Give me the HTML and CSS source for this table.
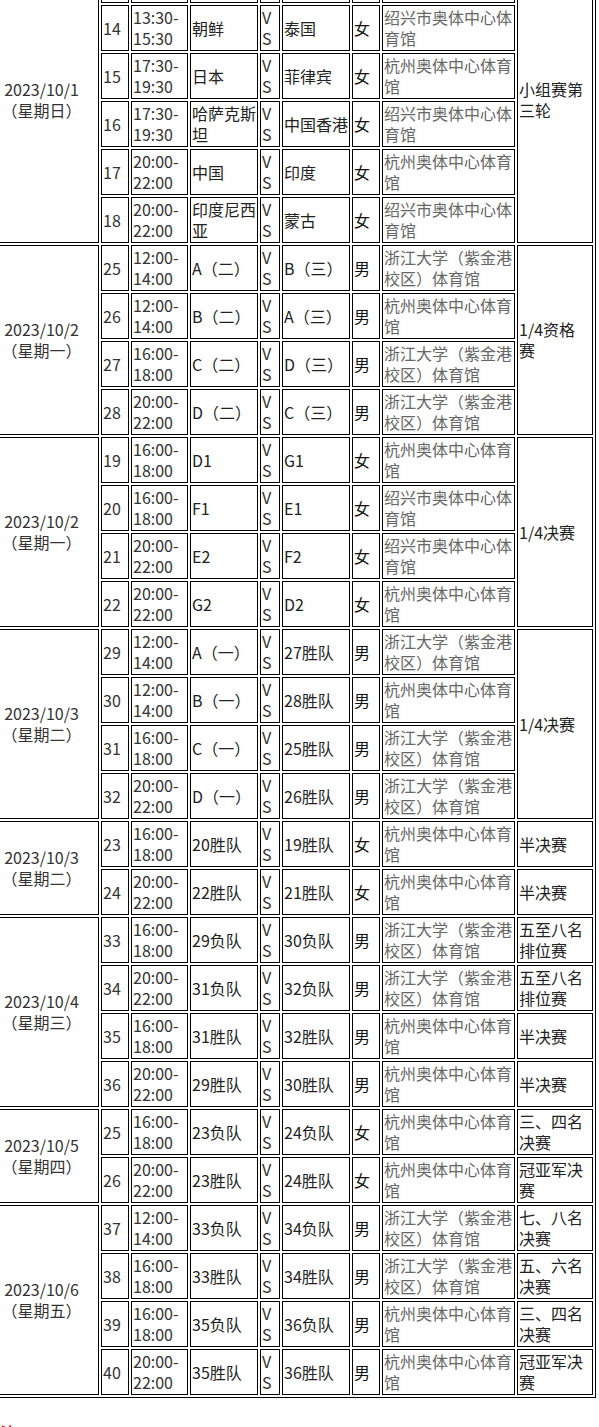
FILE: index.html
```html
<!DOCTYPE html>
<html lang="zh-CN">
<head>
<meta charset="utf-8">
<title>赛程表</title>
<link rel="stylesheet" href="styles.css">
</head>
<body>
<table class="schedule">
<tbody>
<tr class="row-hidden">
<td class="c-date" rowspan="6">2023/10/1<br>（星期日）</td>
<td class="c-num"></td><td class="c-time"></td><td class="c-team"></td><td class="c-vs"></td><td class="c-team2"></td><td class="c-sex"></td><td class="c-venue"></td>
<td class="c-stage" rowspan="6">小组赛第三轮</td>
</tr>
<tr><td class="c-num">14</td><td class="c-time">13:30-15:30</td><td class="c-team">朝鲜</td><td class="c-vs">VS</td><td class="c-team2">泰国</td><td class="c-sex">女</td><td class="c-venue">绍兴市奥体中心体育馆</td></tr>
<tr><td class="c-num">15</td><td class="c-time">17:30-19:30</td><td class="c-team">日本</td><td class="c-vs">VS</td><td class="c-team2">菲律宾</td><td class="c-sex">女</td><td class="c-venue">杭州奥体中心体育馆</td></tr>
<tr><td class="c-num">16</td><td class="c-time">17:30-19:30</td><td class="c-team">哈萨克斯坦</td><td class="c-vs">VS</td><td class="c-team2">中国香港</td><td class="c-sex">女</td><td class="c-venue">绍兴市奥体中心体育馆</td></tr>
<tr><td class="c-num">17</td><td class="c-time">20:00-22:00</td><td class="c-team">中国</td><td class="c-vs">VS</td><td class="c-team2">印度</td><td class="c-sex">女</td><td class="c-venue">杭州奥体中心体育馆</td></tr>
<tr><td class="c-num">18</td><td class="c-time">20:00-22:00</td><td class="c-team">印度尼西亚</td><td class="c-vs">VS</td><td class="c-team2">蒙古</td><td class="c-sex">女</td><td class="c-venue">绍兴市奥体中心体育馆</td></tr>

<tr>
<td class="c-date" rowspan="4">2023/10/2<br>（星期一）</td>
<td class="c-num">25</td><td class="c-time">12:00-14:00</td><td class="c-team">A（二）</td><td class="c-vs">VS</td><td class="c-team2">B（三）</td><td class="c-sex">男</td><td class="c-venue">浙江大学（紫金港校区）体育馆</td>
<td class="c-stage" rowspan="4">1/4资格赛</td>
</tr>
<tr><td class="c-num">26</td><td class="c-time">12:00-14:00</td><td class="c-team">B（二）</td><td class="c-vs">VS</td><td class="c-team2">A（三）</td><td class="c-sex">男</td><td class="c-venue">杭州奥体中心体育馆</td></tr>
<tr><td class="c-num">27</td><td class="c-time">16:00-18:00</td><td class="c-team">C（二）</td><td class="c-vs">VS</td><td class="c-team2">D（三）</td><td class="c-sex">男</td><td class="c-venue">浙江大学（紫金港校区）体育馆</td></tr>
<tr><td class="c-num">28</td><td class="c-time">20:00-22:00</td><td class="c-team">D（二）</td><td class="c-vs">VS</td><td class="c-team2">C（三）</td><td class="c-sex">男</td><td class="c-venue">浙江大学（紫金港校区）体育馆</td></tr>

<tr>
<td class="c-date" rowspan="4">2023/10/2<br>（星期一）</td>
<td class="c-num">19</td><td class="c-time">16:00-18:00</td><td class="c-team">D1</td><td class="c-vs">VS</td><td class="c-team2">G1</td><td class="c-sex">女</td><td class="c-venue">杭州奥体中心体育馆</td>
<td class="c-stage" rowspan="4">1/4决赛</td>
</tr>
<tr><td class="c-num">20</td><td class="c-time">16:00-18:00</td><td class="c-team">F1</td><td class="c-vs">VS</td><td class="c-team2">E1</td><td class="c-sex">女</td><td class="c-venue">绍兴市奥体中心体育馆</td></tr>
<tr><td class="c-num">21</td><td class="c-time">20:00-22:00</td><td class="c-team">E2</td><td class="c-vs">VS</td><td class="c-team2">F2</td><td class="c-sex">女</td><td class="c-venue">绍兴市奥体中心体育馆</td></tr>
<tr><td class="c-num">22</td><td class="c-time">20:00-22:00</td><td class="c-team">G2</td><td class="c-vs">VS</td><td class="c-team2">D2</td><td class="c-sex">女</td><td class="c-venue">杭州奥体中心体育馆</td></tr>

<tr>
<td class="c-date" rowspan="4">2023/10/3<br>（星期二）</td>
<td class="c-num">29</td><td class="c-time">12:00-14:00</td><td class="c-team">A（一）</td><td class="c-vs">VS</td><td class="c-team2">27胜队</td><td class="c-sex">男</td><td class="c-venue">浙江大学（紫金港校区）体育馆</td>
<td class="c-stage" rowspan="4">1/4决赛</td>
</tr>
<tr><td class="c-num">30</td><td class="c-time">12:00-14:00</td><td class="c-team">B（一）</td><td class="c-vs">VS</td><td class="c-team2">28胜队</td><td class="c-sex">男</td><td class="c-venue">杭州奥体中心体育馆</td></tr>
<tr><td class="c-num">31</td><td class="c-time">16:00-18:00</td><td class="c-team">C（一）</td><td class="c-vs">VS</td><td class="c-team2">25胜队</td><td class="c-sex">男</td><td class="c-venue">浙江大学（紫金港校区）体育馆</td></tr>
<tr><td class="c-num">32</td><td class="c-time">20:00-22:00</td><td class="c-team">D（一）</td><td class="c-vs">VS</td><td class="c-team2">26胜队</td><td class="c-sex">男</td><td class="c-venue">浙江大学（紫金港校区）体育馆</td></tr>

<tr>
<td class="c-date" rowspan="2">2023/10/3<br>（星期二）</td>
<td class="c-num">23</td><td class="c-time">16:00-18:00</td><td class="c-team">20胜队</td><td class="c-vs">VS</td><td class="c-team2">19胜队</td><td class="c-sex">女</td><td class="c-venue">杭州奥体中心体育馆</td><td class="c-stage">半决赛</td>
</tr>
<tr><td class="c-num">24</td><td class="c-time">20:00-22:00</td><td class="c-team">22胜队</td><td class="c-vs">VS</td><td class="c-team2">21胜队</td><td class="c-sex">女</td><td class="c-venue">杭州奥体中心体育馆</td><td class="c-stage">半决赛</td></tr>

<tr>
<td class="c-date" rowspan="4">2023/10/4<br>（星期三）</td>
<td class="c-num">33</td><td class="c-time">16:00-18:00</td><td class="c-team">29负队</td><td class="c-vs">VS</td><td class="c-team2">30负队</td><td class="c-sex">男</td><td class="c-venue">浙江大学（紫金港校区）体育馆</td><td class="c-stage">五至八名排位赛</td>
</tr>
<tr><td class="c-num">34</td><td class="c-time">20:00-22:00</td><td class="c-team">31负队</td><td class="c-vs">VS</td><td class="c-team2">32负队</td><td class="c-sex">男</td><td class="c-venue">浙江大学（紫金港校区）体育馆</td><td class="c-stage">五至八名排位赛</td></tr>
<tr><td class="c-num">35</td><td class="c-time">16:00-18:00</td><td class="c-team">31胜队</td><td class="c-vs">VS</td><td class="c-team2">32胜队</td><td class="c-sex">男</td><td class="c-venue">杭州奥体中心体育馆</td><td class="c-stage">半决赛</td></tr>
<tr><td class="c-num">36</td><td class="c-time">20:00-22:00</td><td class="c-team">29胜队</td><td class="c-vs">VS</td><td class="c-team2">30胜队</td><td class="c-sex">男</td><td class="c-venue">杭州奥体中心体育馆</td><td class="c-stage">半决赛</td></tr>

<tr>
<td class="c-date" rowspan="2">2023/10/5<br>（星期四）</td>
<td class="c-num">25</td><td class="c-time">16:00-18:00</td><td class="c-team">23负队</td><td class="c-vs">VS</td><td class="c-team2">24负队</td><td class="c-sex">女</td><td class="c-venue">杭州奥体中心体育馆</td><td class="c-stage">三、四名决赛</td>
</tr>
<tr><td class="c-num">26</td><td class="c-time">20:00-22:00</td><td class="c-team">23胜队</td><td class="c-vs">VS</td><td class="c-team2">24胜队</td><td class="c-sex">女</td><td class="c-venue">杭州奥体中心体育馆</td><td class="c-stage">冠亚军决赛</td></tr>

<tr>
<td class="c-date" rowspan="4">2023/10/6<br>（星期五）</td>
<td class="c-num">37</td><td class="c-time">12:00-14:00</td><td class="c-team">33负队</td><td class="c-vs">VS</td><td class="c-team2">34负队</td><td class="c-sex">男</td><td class="c-venue">浙江大学（紫金港校区）体育馆</td><td class="c-stage">七、八名决赛</td>
</tr>
<tr><td class="c-num">38</td><td class="c-time">16:00-18:00</td><td class="c-team">33胜队</td><td class="c-vs">VS</td><td class="c-team2">34胜队</td><td class="c-sex">男</td><td class="c-venue">浙江大学（紫金港校区）体育馆</td><td class="c-stage">五、六名决赛</td></tr>
<tr><td class="c-num">39</td><td class="c-time">16:00-18:00</td><td class="c-team">35负队</td><td class="c-vs">VS</td><td class="c-team2">36负队</td><td class="c-sex">男</td><td class="c-venue">杭州奥体中心体育馆</td><td class="c-stage">三、四名决赛</td></tr>
<tr><td class="c-num">40</td><td class="c-time">20:00-22:00</td><td class="c-team">35胜队</td><td class="c-vs">VS</td><td class="c-team2">36胜队</td><td class="c-sex">男</td><td class="c-venue">杭州奥体中心体育馆</td><td class="c-stage">冠亚军决赛</td></tr>
</tbody>
</table>
<p class="note"><span class="note-mark">注：</span></p>
</body>
</html>
```

FILE: styles.css
```css
html, body {
  margin: 0;
  padding: 0;
  background: #fff;
}
body {
  font-family: "Noto Sans CJK SC", "Noto Sans", sans-serif;
  font-size: 16px;
  line-height: 21px;
  color: #333;
  overflow: hidden;
}
.schedule {
  table-layout: fixed;
  width: 615px;
  margin: -46px 0 0 -19px;
  border: 1px solid #000;
  border-collapse: separate;
  border-spacing: 2px;
}
.schedule td {
  box-sizing: border-box;
  border: 1px solid #000;
  padding: 1px;
  vertical-align: middle;
  text-align: left;
  overflow: hidden;
}
.row-hidden td {
  height: 46px;
}
.c-date { width: 115px; text-align: center !important; }
.c-num { width: 28px; }
.c-time { width: 57px; }
.c-team { width: 68px; color: #222; }
.c-vs { width: 20px; word-break: break-all; }
.c-team2 { width: 68px; color: #222; }
.c-sex { width: 28px; color: #111; }
.c-venue { width: 133px; color: #666; }
.c-stage { width: 76px; color: #222; }
.note {
  margin: 24px 0 0 0;
}
.note-mark {
  color: #e03030;
  font-weight: bold;
}
```
